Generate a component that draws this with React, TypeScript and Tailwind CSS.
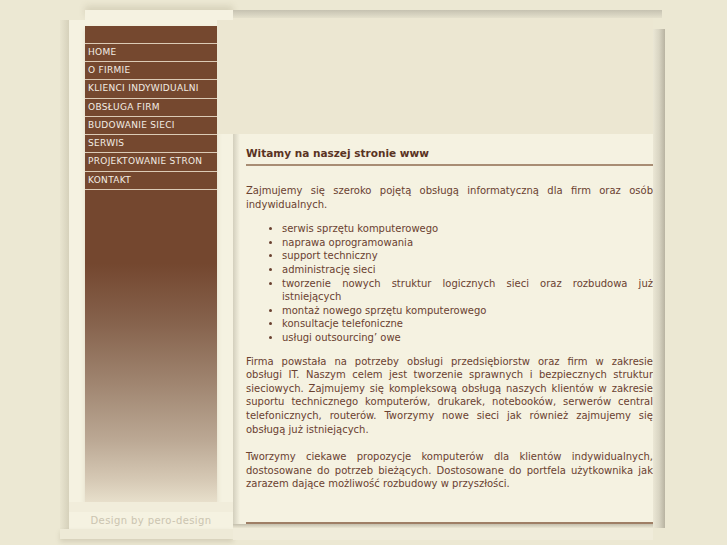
import React from 'react';

const MENU = [
  { label: 'HOME', h: 'h-[18px]' },
  { label: 'O FIRMIE', h: 'h-[18px]' },
  { label: 'KLIENCI INDYWIDUALNI', h: 'h-[19px]' },
  { label: 'OBSŁUGA FIRM', h: 'h-[18px]' },
  { label: 'BUDOWANIE SIECI', h: 'h-[18px]' },
  { label: 'SERWIS', h: 'h-[18px]' },
  { label: 'PROJEKTOWANIE STRON', h: 'h-[19px]' },
  { label: 'KONTAKT', h: 'h-[18px]' },
];

// line breaks follow the original page, every line but the last is stretched
const SERVICES: string[][] = [
  ['serwis sprzętu komputerowego'],
  ['naprawa oprogramowania'],
  ['support techniczny'],
  ['administrację sieci'],
  ['tworzenie nowych struktur logicznych sieci oraz rozbudowa już', 'istniejących'],
  ['montaż nowego sprzętu komputerowego'],
  ['konsultacje telefoniczne'],
  ['usługi outsourcing’ owe'],
];

const INTRO = ['Zajmujemy się szeroko pojętą obsługą informatyczną dla firm oraz osób', 'indywidualnych.'];

const ABOUT = [
  'Firma powstała na potrzeby obsługi przedsiębiorstw oraz firm w zakresie',
  'obsługi IT. Naszym celem jest tworzenie sprawnych i bezpiecznych struktur',
  'sieciowych. Zajmujemy się kompleksową obsługą naszych klientów w zakresie',
  'suportu technicznego komputerów, drukarek, notebooków, serwerów central',
  'telefonicznych, routerów. Tworzymy nowe sieci jak również zajmujemy się',
  'obsługą już istniejących.',
];

const OFFER = [
  'Tworzymy ciekawe propozycje komputerów dla klientów indywidualnych,',
  'dostosowane do potrzeb bieżących. Dostosowane do portfela użytkownika jak',
  'zarazem dające możliwość rozbudowy w przyszłości.',
];

const Lines: React.FC<{ lines: string[] }> = ({ lines }) => (
  <>
    {lines.map((line, i) => (
      <span
        key={i}
        className={i < lines.length - 1 ? 'block whitespace-nowrap text-justify [text-align-last:justify]' : 'block whitespace-nowrap'}
      >
        {line}
      </span>
    ))}
  </>
);

const Sidebar: React.FC = () => (
  <div className="flex w-[173px] flex-col">
    <div className="ml-[25px] h-[10px] bg-[#f5f2e1] shadow-[0_-4px_6px_rgba(120,110,80,0.18)]" />
    <div className="flex">
      <div className="w-[9px] bg-gradient-to-r from-[#e9e5d0] to-[#d6d1bb]" />
      <div className="flex w-[164px] flex-col bg-[#f5f2e1]">
        <div className="flex">
          <div className="w-[16px]" />
          <nav className="mt-[6px] flex w-[132px] flex-col shadow-[0_3px_5px_rgba(120,100,70,0.15)]">
            <div className="h-[17px] bg-[#75482f]" />
            {MENU.map((item) => (
              <a
                key={item.label}
                href="#"
                className={`${item.h} flex items-center border-t border-[#dccbb6] bg-[#75482f] pl-[3px] text-[9px] tracking-[0.3px] text-[#f3ede4]`}
              >
                {item.label}
              </a>
            ))}
            <div className="h-[313px] border-t border-[#dccbb6] bg-[linear-gradient(to_bottom,#74472f_0px,#74472f_74px,#85614b_130px,#9e836e_190px,#bba894_250px,#d6c9b5_290px,#e8e0cc_313px)]" />
          </nav>
          <div className="flex w-[16px] flex-col">
            <div className="h-[114px] bg-[#ece7d2]" />
          </div>
        </div>
        <div className="h-[10px] bg-[#f1eddb]" />
        <p className="h-[17px] text-center text-[10px] leading-[18px] tracking-[0.4px] text-[#cbc4b0]">
          Design by pero-design
        </p>
      </div>
    </div>
    <div className="h-[10px] bg-[#eeead7] shadow-[0_3px_5px_rgba(120,110,80,0.2)]" />
  </div>
);

const Content: React.FC = () => (
  <div className="flex w-[432px] flex-col">
    <div className="h-[8px] w-[429px] bg-gradient-to-b from-[#c6c2b1] to-[#e4e0cc]" />
    <div className="flex">
      <main className="flex w-[420px] flex-col">
        <div className="h-[116px] bg-[#ece7d2]" />
        <div className="flex h-[390px] bg-[#f5f2e1]">
          <div className="w-[7px] bg-gradient-to-r from-[#d3cfbd] to-[#f5f2e1]" />
          <div className="flex w-[413px] flex-col pl-[6px] pt-[12px] text-[10px] leading-[13.6px] text-[#6a4130]">
            <h1 className="border-b-2 border-[#a88d74] pb-[4px] text-[10.5px] font-bold leading-[14px] text-[#5a3323]">
              Witamy na naszej stronie www
            </h1>
            <p className="mt-[18px]">
              <Lines lines={INTRO} />
            </p>
            <ul className="mt-[11px] list-disc pl-[36px]">
              {SERVICES.map((s) => (
                <li key={s[0]}>
                  <Lines lines={s} />
                </li>
              ))}
            </ul>
            <p className="mt-[10px]">
              <Lines lines={ABOUT} />
            </p>
            <p className="mt-[14px]">
              <Lines lines={OFFER} />
            </p>
            <div className="mt-auto h-[2px] bg-[#9f7f66]" />
          </div>
        </div>
        <div className="h-[4px] bg-gradient-to-b from-[#c4bfad] to-[#ebe7d3]" />
        <div className="h-[12px] bg-[#f0ecda]" />
      </main>
      <div className="mt-[11px] h-[499px] w-[12px] bg-gradient-to-r from-[#ebe7d5] via-[#d9d5c3] to-[#b8b3a1]" />
    </div>
  </div>
);

export default function App() {
  return (
    <div className="min-h-screen bg-[#ece8d3] font-['DejaVu_Sans',Verdana,sans-serif]">
      <div className="ml-[60px] flex pt-[10px]">
        <Sidebar />
        <Content />
      </div>
    </div>
  );
}
